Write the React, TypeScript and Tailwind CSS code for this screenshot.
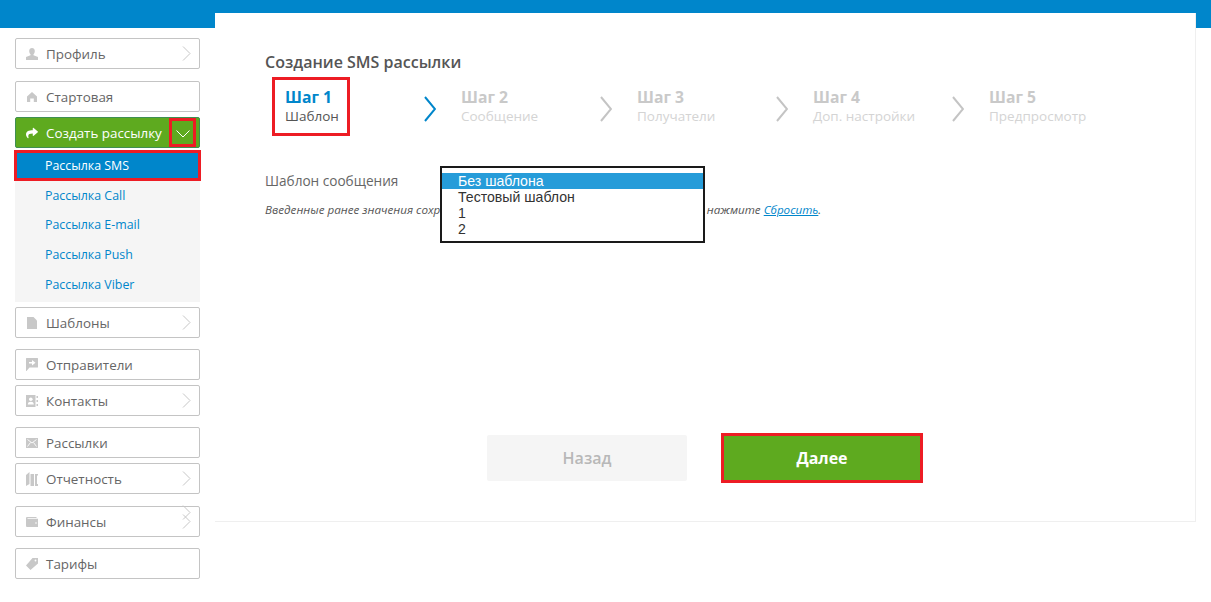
import type { ReactNode } from 'react';
import { FaShare } from 'react-icons/fa';

const FONT = "font-['Open_Sans',sans-serif]";

function Chevron({ className }: { className: string }) {
  return (
    <svg viewBox="0 0 12 26" fill="none" stroke="currentColor" className={className}>
      <polyline points="1,1 11,13 1,25" strokeWidth="2" />
    </svg>
  );
}

function SmallChevron({ className }: { className: string }) {
  return (
    <svg viewBox="0 0 9 15" fill="none" stroke="#c6c6c6" className={className}>
      <polyline points="1,0.5 8,7.5 1,14.5" strokeWidth="1" />
    </svg>
  );
}

/* menu icons, all drawn on a 12 wide box */
function UserIcon() {
  return (
    <svg viewBox="0 0 12 12" className="w-3 h-3" fill="#c8c8c8">
      <path d="M3.200 3c0-1.800 1.200-3 2.800-3s2.800 1.200 2.800 3c0 1.400-.6 2.600-1.300 3.200v1.100L12 9v3H0V9l4.500-1.700V6.200C3.800 5.600 3.200 4.400 3.200 3z" />
    </svg>
  );
}

function HomeIcon() {
  return (
    <svg viewBox="0 0 10 10" className="w-[10px] h-[10px]" fill="#c8c8c8">
      <path d="M5 0l5 4.500V10H6.800V6.500H3.200V10H0V4.500z" />
    </svg>
  );
}

function FileIcon() {
  return (
    <svg viewBox="0 0 10 12" className="w-[10px] h-3" fill="#c8c8c8">
      <path d="M0 0h6.500L10 3.500V12H0z" />
    </svg>
  );
}

function SendersIcon() {
  return (
    <svg viewBox="0 0 12 13" className="w-3 h-[13px]" fill="#c8c8c8">
      <path d="M0.500 0h11a.5.500 0 0 1 .5.500V9a.5.500 0 0 1-.5.500H3.500L0.500 13H0V.5A.5.500 0 0 1 .5 0z" />
      <path d="M3 4h3V2l3.500 2.700L6 7.400V5.600H3z" fill="#fff" />
    </svg>
  );
}

function ContactsIcon() {
  return (
    <svg viewBox="0 0 12 12" className="w-3 h-3" fill="#c8c8c8">
      <path d="M0 0h9.500v12H0z" />
      <path d="M10.500 1H12v2h-1.500zM10.500 5H12v2h-1.500zM10.500 9H12v2h-1.500z" />
      <circle cx="4.800" cy="4.300" r="1.800" fill="#fff" />
      <path d="M1.800 9.500c0-2 1.300-2.700 3-2.700s3 .7 3 2.700z" fill="#fff" />
    </svg>
  );
}

function MailIcon() {
  return (
    <svg viewBox="0 0 12 10" className="w-3 h-[10px]" fill="#c8c8c8">
      <path d="M0 0h12v10H0z" />
      <path d="M1.500 1.500L6 5l4.500-3.500M1.500 8.500L4.500 4.500M10.500 8.500L7.500 4.500" fill="none" stroke="#fff" strokeWidth="0.9" />
    </svg>
  );
}

function ReportIcon() {
  return (
    <svg viewBox="0 0 12 14" className="w-3 h-[14px]" fill="#c8c8c8">
      <path d="M0 3l3.500-3v12L0 14zM4.500 2H8v12H4.500zM9 2h3v1.500h-1V12h1v2H9z" />
    </svg>
  );
}

function WalletIcon() {
  return (
    <svg viewBox="0 0 12 10" className="w-3 h-[10px]" fill="#c8c8c8">
      <path d="M1 0h9.500v1H1.500v.8H12V10H1a1 1 0 0 1-1-1V1a1 1 0 0 1 1-1z" />
      <circle cx="10" cy="6" r="0.800" fill="#fff" />
    </svg>
  );
}

function TagIcon() {
  return (
    <svg viewBox="0 0 12 12" className="w-3 h-3" fill="#c8c8c8">
      <path fillRule="evenodd" d="M6.500 0H12v5.500L4.500 12 0 7.500zM9.500 1.600a.9.900 0 1 0 0 1.800.9.900 0 0 0 0-1.800z" />
    </svg>
  );
}

function MenuItem({
  icon,
  label,
  arrow,
  className,
  children,
}: {
  icon: ReactNode;
  label: string;
  arrow?: boolean;
  className: string;
  children?: ReactNode;
}) {
  return (
    <div className={`relative h-[31px] flex items-center border border-[#c4c4c4] rounded-[2px] bg-white ${className}`}>
      <span className="w-[30px] flex justify-center shrink-0 pl-[1px]">{icon}</span>
      <span className="pt-[1px] text-[13.400px] text-[#666]">{label}</span>
      {arrow && <SmallChevron className="ml-auto mr-2 w-[9px] h-[15px]" />}
      {children}
    </div>
  );
}

function Sidebar() {
  const sub = ['Рассылка Call', 'Рассылка E-mail', 'Рассылка Push', 'Рассылка Viber'];
  return (
    <aside className="w-[215px] shrink-0 pl-[15px] pr-[15px] pt-[25px]">
      <MenuItem icon={<UserIcon />} label="Профиль" arrow className="" />
      <MenuItem icon={<HomeIcon />} label="Стартовая" className="mt-3" />

      <div className="relative mt-[5px] h-[31px] flex items-center bg-[#5eaa1f] border border-[#3f8f52] rounded-[2px]">
        <span className="w-[30px] flex justify-center shrink-0 pl-[1px]">
          <FaShare className="text-white text-[12px]" />
        </span>
        <span className="pt-[1px] text-[13.400px] text-white">Создать рассылку</span>
        <div className="absolute left-[153px] top-0 w-[27px] h-[29px] border-[3px] border-[#ed1c24] flex items-center justify-center">
          <svg viewBox="0 0 14 8" className="w-[14px] h-2 mt-[3px]" fill="none" stroke="#fff">
            <polyline points="0.500,0.500 7,7 13.500,0.500" />
          </svg>
        </div>
      </div>

      <div className="mt-[2px] h-[152px] bg-[#f5f5f5]">
        <div className="relative -mx-[1px] h-[31px] bg-[#0086cb] border-[3px] border-[#ed1c24] flex items-center pl-[28px] pt-[1px] text-[12.400px] text-white">
          Рассылка SMS
        </div>
        {sub.map((s) => (
          <div key={s} className="h-[29.700px] flex items-center pl-[30px] text-[12.400px] text-[#0086cb]">
            {s}
          </div>
        ))}
      </div>

      <MenuItem icon={<FileIcon />} label="Шаблоны" arrow className="mt-[5px]" />
      <MenuItem icon={<SendersIcon />} label="Отправители" className="mt-[11px]" />
      <MenuItem icon={<ContactsIcon />} label="Контакты" arrow className="mt-[5px]" />
      <MenuItem icon={<MailIcon />} label="Рассылки" className="mt-[11px]" />
      <MenuItem icon={<ReportIcon />} label="Отчетность" arrow className="mt-[5px]" />
      <MenuItem icon={<WalletIcon />} label="Финансы" arrow className="mt-3">
        <SmallChevron className="absolute right-2 -top-[2px] w-[9px] h-[15px]" />
      </MenuItem>
      <MenuItem icon={<TagIcon />} label="Тарифы" className="mt-[11px]" />
    </aside>
  );
}

const STEPS = [
  { title: 'Шаг 1', sub: 'Шаблон' },
  { title: 'Шаг 2', sub: 'Сообщение' },
  { title: 'Шаг 3', sub: 'Получатели' },
  { title: 'Шаг 4', sub: 'Доп. настройки' },
  { title: 'Шаг 5', sub: 'Предпросмотр' },
];

function Stepper() {
  return (
    <div className="flex mt-[14px] ml-5">
      {STEPS.map((s, i) => (
        <div key={s.title} className={`flex items-start ${i < 4 ? 'w-[176px]' : ''}`}>
          <div className="relative w-[139px] shrink-0">
            <div className={`text-[15.700px] leading-[20px] font-bold ${i === 0 ? 'text-[#0086cb]' : 'text-[#c9c9c9]'}`}>
              {s.title}
            </div>
            <div className={`text-[13.500px] leading-[19px] ${i === 0 ? 'text-[#555]' : 'text-[#d4d4d4]'}`}>{s.sub}</div>
            {i === 0 && (
              <div className="absolute -left-[13px] -top-[10px] w-[78px] h-[59px] border-[3px] border-[#ed1c24]" />
            )}
          </div>
          {i < 4 && (
            <Chevron className={`w-3 h-[26px] mt-[9px] ${i === 0 ? 'text-[#0086cb]' : 'text-[#c4c4c4]'}`} />
          )}
        </div>
      ))}
    </div>
  );
}

function TemplateField() {
  const options = ['Без шаблона', 'Тестовый шаблон', '1', '2'];
  return (
    <div className="relative mt-[46px] h-[60px]">
      <div className="text-[13.600px] leading-[18px] text-[#666]">Шаблон сообщения</div>
      <p className="mt-[13px] text-[11.650px] leading-[14px] italic text-[#555] whitespace-nowrap">
        Введенные ранее значения сохраняются при переходе. Чтобы очистить поля, нажмите{' '}
        <a className="text-[#0086cb] underline">Сбросить</a>.
      </p>
      <div className="absolute left-[175px] -top-[6px] w-[265px] h-[77px] border-2 border-[#1a1a1a] bg-white pt-[5px] font-['Liberation_Sans',sans-serif] text-[14.100px] leading-[16px] text-[#333]">
        {options.map((o, i) => (
          <div key={o} className={`pl-[16px] h-4 ${i === 0 ? 'bg-[#269cd9] text-white' : ''}`}>
            {o}
          </div>
        ))}
      </div>
    </div>
  );
}

export default function App() {
  return (
    <div className={`min-h-[602px] bg-white ${FONT}`}>
      <div className="h-[28px] bg-[#0086cb]" />
      <div className="flex -mt-[15px]">
        <Sidebar />
        <main className="relative w-[981px] h-[509px] bg-white border-r border-b border-[#efefef] pl-[50px] pt-[38px]">
          <h1 className="text-[16px] leading-[22px] font-semibold text-[#555]">Создание SMS рассылки</h1>
          <Stepper />
          <TemplateField />
          <div className="flex items-center mt-[201px] ml-[222px]">
            <div className="w-[200px] h-[46px] rounded-[2px] bg-[#f5f5f5] flex items-center justify-center text-[16px] font-semibold text-[#b8b8b8]">
              Назад
            </div>
            <div className="ml-[34px] w-[202px] h-[50px] border-[3px] border-[#ed1c24] bg-[#5eaa1f] flex items-center justify-center text-[16px] font-bold text-white">
              Далее
            </div>
          </div>
        </main>
      </div>
    </div>
  );
}
